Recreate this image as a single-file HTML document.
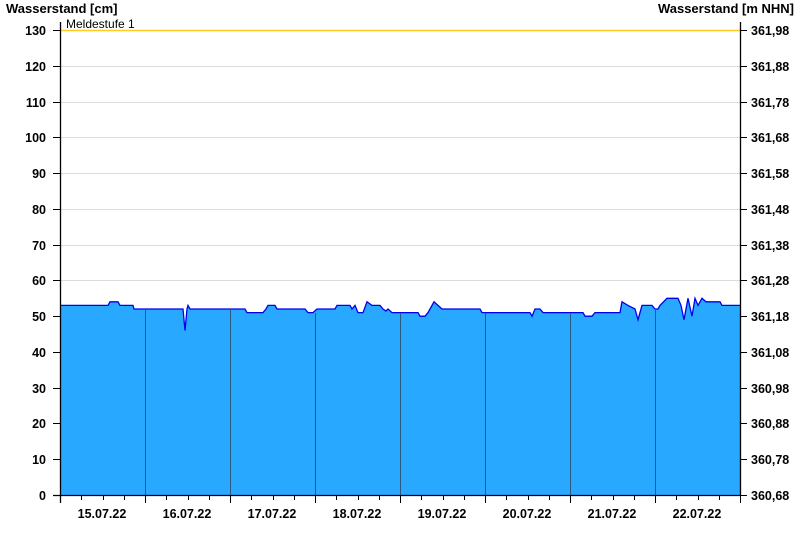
<!DOCTYPE html>
<html><head><meta charset="utf-8"><style>
body{margin:0;background:#fff;}
svg text{font-family:"Liberation Sans",Arial,sans-serif;}
</style></head><body>
<svg width="800" height="550" xmlns="http://www.w3.org/2000/svg">
<rect width="800" height="550" fill="#fff"/>
<g stroke="#dcdcdc" stroke-width="1">
<line x1="60" y1="66.5" x2="740" y2="66.5"/><line x1="60" y1="102.5" x2="740" y2="102.5"/>
<line x1="60" y1="137.5" x2="740" y2="137.5"/><line x1="60" y1="173.5" x2="740" y2="173.5"/>
<line x1="60" y1="209.5" x2="740" y2="209.5"/><line x1="60" y1="245.5" x2="740" y2="245.5"/>
<line x1="60" y1="280.5" x2="740" y2="280.5"/>
</g>
<line x1="60" y1="30.5" x2="740" y2="30.5" stroke="#ffcc22" stroke-width="1.5"/>
<text x="66" y="28" font-size="12" fill="#000">Meldestufe 1</text>
<polygon fill="#29a8ff" points="60,495 60,305.4 108,305.4 110,301.8 118,301.8 120,305.4 133,305.4 134,309 183,309 185,330.5 187,309 188,305.4 190,309 245,309 247,312.6 263,312.6 266,309 268,305.4 275,305.4 277,309 305,309 308,312.6 313,312.6 317,309 335,309 337,305.4 350,305.4 352,309 355,305.4 358,312.6 363,312.6 367,301.8 372,305.4 380,305.4 383,309 386,311 388,309 392,312.6 418,312.6 420,316.2 425,316.2 428,312.6 434,301.8 438,305.4 442,309 480,309 482,312.6 530,312.6 532,316.2 535,309 540,309 543,312.6 583,312.6 585,316.2 592,316.2 595,312.6 620,312.6 622,301.8 628,305.4 635,309 638,319.7 642,305.4 652,305.4 655,309 658,309 660,305.4 667,298.3 678,298.3 681,305.4 684,319.7 688,298.3 692,316.2 695,298.3 698,305.4 702,298.3 706,301.8 720,301.8 722,305.4 740,305.4 740,495"/>
<polyline fill="none" stroke="#0000ee" stroke-width="1.3" points="60,305.4 108,305.4 110,301.8 118,301.8 120,305.4 133,305.4 134,309 183,309 185,330.5 187,309 188,305.4 190,309 245,309 247,312.6 263,312.6 266,309 268,305.4 275,305.4 277,309 305,309 308,312.6 313,312.6 317,309 335,309 337,305.4 350,305.4 352,309 355,305.4 358,312.6 363,312.6 367,301.8 372,305.4 380,305.4 383,309 386,311 388,309 392,312.6 418,312.6 420,316.2 425,316.2 428,312.6 434,301.8 438,305.4 442,309 480,309 482,312.6 530,312.6 532,316.2 535,309 540,309 543,312.6 583,312.6 585,316.2 592,316.2 595,312.6 620,312.6 622,301.8 628,305.4 635,309 638,319.7 642,305.4 652,305.4 655,309 658,309 660,305.4 667,298.3 678,298.3 681,305.4 684,319.7 688,298.3 692,316.2 695,298.3 698,305.4 702,298.3 706,301.8 720,301.8 722,305.4 740,305.4"/>
<g stroke="#2a5a80" stroke-width="1">
<line x1="145.5" y1="309" x2="145.5" y2="495"/><line x1="230.5" y1="309" x2="230.5" y2="495"/>
<line x1="315.5" y1="313" x2="315.5" y2="495"/><line x1="400.5" y1="313" x2="400.5" y2="495"/>
<line x1="485.5" y1="313" x2="485.5" y2="495"/><line x1="570.5" y1="313" x2="570.5" y2="495"/>
<line x1="655.5" y1="309" x2="655.5" y2="495"/>
</g>
<g stroke="#000" stroke-width="1.3">
<line x1="60.5" y1="22" x2="60.5" y2="503"/>
<line x1="740.5" y1="22" x2="740.5" y2="495"/>
<line x1="53" y1="495.5" x2="740" y2="495.5"/>
</g>
<g stroke="#000" stroke-width="1">
<path d="M53 30.5H60M53 66.5H60M53 102.5H60M53 137.5H60M53 173.5H60M53 209.5H60M53 245.5H60M53 280.5H60M53 316.5H60M53 352.5H60M53 388.5H60M53 423.5H60M53 459.5H60"/>
<path d="M740 30.5H747M740 66.5H747M740 102.5H747M740 137.5H747M740 173.5H747M740 209.5H747M740 245.5H747M740 280.5H747M740 316.5H747M740 352.5H747M740 388.5H747M740 423.5H747M740 459.5H747M740 495.5H747"/>
<path d="M145.5 495V503M230.5 495V503M315.5 495V503M400.5 495V503M485.5 495V503M570.5 495V503M655.5 495V503M740.5 495V503"/>
<path d="M81.5 495V500M103.5 495V500M124.5 495V500M166.5 495V500M188.5 495V500M209.5 495V500M251.5 495V500M273.5 495V500M294.5 495V500M336.5 495V500M358.5 495V500M379.5 495V500M421.5 495V500M443.5 495V500M464.5 495V500M506.5 495V500M528.5 495V500M549.5 495V500M591.5 495V500M613.5 495V500M634.5 495V500M676.5 495V500M698.5 495V500M719.5 495V500"/>
</g>
<g font-size="13" font-weight="bold" fill="#000">
<text x="6" y="13">Wasserstand [cm]</text>
<text x="794" y="13" text-anchor="end">Wasserstand [m NHN]</text>
</g>
<g font-size="12.5" font-weight="bold" fill="#000" text-anchor="end">
<text x="46" y="35">130</text><text x="46" y="71">120</text><text x="46" y="107">110</text>
<text x="46" y="142">100</text><text x="46" y="178">90</text><text x="46" y="214">80</text>
<text x="46" y="250">70</text><text x="46" y="285">60</text><text x="46" y="321">50</text>
<text x="46" y="357">40</text><text x="46" y="393">30</text><text x="46" y="428">20</text>
<text x="46" y="464">10</text><text x="46" y="500">0</text>
</g>
<g font-size="12.5" font-weight="bold" fill="#000">
<text x="751" y="35">361,98</text><text x="751" y="71">361,88</text><text x="751" y="107">361,78</text>
<text x="751" y="142">361,68</text><text x="751" y="178">361,58</text><text x="751" y="214">361,48</text>
<text x="751" y="250">361,38</text><text x="751" y="285">361,28</text><text x="751" y="321">361,18</text>
<text x="751" y="357">361,08</text><text x="751" y="393">360,98</text><text x="751" y="428">360,88</text>
<text x="751" y="464">360,78</text><text x="751" y="500">360,68</text>
</g>
<g font-size="12.5" font-weight="bold" fill="#000" text-anchor="middle">
<text x="102" y="518">15.07.22</text><text x="187" y="518">16.07.22</text><text x="272" y="518">17.07.22</text>
<text x="357" y="518">18.07.22</text><text x="442" y="518">19.07.22</text><text x="527" y="518">20.07.22</text>
<text x="612" y="518">21.07.22</text><text x="697" y="518">22.07.22</text>
</g>
</svg>
</body></html>
